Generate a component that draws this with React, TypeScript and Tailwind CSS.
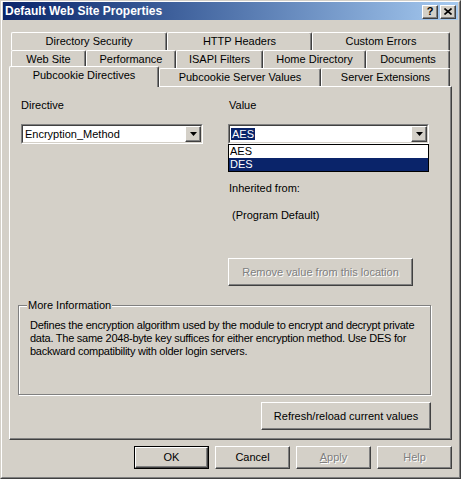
import React from "react";

const raised =
  "border border-t-white border-l-white border-r-[#404040] border-b-[#404040] shadow-[inset_-1px_-1px_0_#808080]";

function Tab({ label, className }: { label: string; className: string }) {
  return (
    <div
      className={`h-full flex items-center justify-center rounded-t-[2px] border-l border-t border-r border-l-white border-t-white border-r-[#404040] shadow-[inset_-1px_0_0_#808080] ${className}`}
    >
      {label}
    </div>
  );
}

function Button({
  children,
  className,
  disabled,
  isDefault,
}: {
  children: React.ReactNode;
  className: string;
  disabled?: boolean;
  isDefault?: boolean;
}) {
  const text = disabled ? "text-[#808080] [text-shadow:1px_1px_0_#fff]" : "text-black";
  const inner = (
    <div className={`h-full w-full flex items-center justify-center ${raised} ${text}`}>{children}</div>
  );
  if (isDefault) {
    return <div className={`border border-black ${className}`}>{inner}</div>;
  }
  return <div className={className}>{inner}</div>;
}

function Combo({ children, className }: { children: React.ReactNode; className: string }) {
  return (
    <div
      className={`h-[20px] border border-t-[#808080] border-l-[#808080] border-b-white border-r-white ${className}`}
    >
      <div className="h-full flex items-center bg-white border border-t-[#404040] border-l-[#404040] border-b-[#d4d0c8] border-r-[#d4d0c8]">
        <div className="flex-1 pl-[1px] leading-[13px]">{children}</div>
        <div className={`w-[16px] h-full flex items-center justify-center bg-[#d4d0c8] ${raised}`}>
          <svg width="7" height="4" viewBox="0 0 7 4">
            <path d="M0 0h7L3.5 4z" fill="#000" />
          </svg>
        </div>
      </div>
    </div>
  );
}

export default function App() {
  return (
    <div className="w-[461px] h-[479px] bg-[#d4d0c8] border border-t-[#d4d0c8] border-l-[#d4d0c8] border-r-[#404040] border-b-[#404040] font-['Liberation_Sans',Arial,sans-serif] text-[11px] text-black select-none">
      <div className="h-full border border-t-white border-l-white border-r-[#808080] border-b-[#808080] px-[1px] flex flex-col">
        {/* title bar */}
        <div className="h-[18px] flex items-center bg-gradient-to-r from-[#0a246a] to-[#a6caf0] pl-[2px] pr-[2px]">
          <div className="flex-1 text-white font-bold text-[12px] leading-none">Default Web Site Properties</div>
          <div className="flex gap-[2px] pt-[1px]">
            <div className={`w-[16px] h-[14px] bg-[#d4d0c8] flex items-center justify-center font-bold text-[11px] leading-none ${raised}`}>
              ?
            </div>
            <div className={`w-[16px] h-[14px] bg-[#d4d0c8] flex items-center justify-center ${raised}`}>
              <svg width="8" height="7" viewBox="0 0 8 7">
                <path d="M0.5 0.5l7 6M7.5 0.5l-7 6" stroke="#000" strokeWidth="1.6" />
              </svg>
            </div>
          </div>
        </div>

        {/* content */}
        <div className="flex-1 flex flex-col px-[6px] pt-[12px]">
          {/* tabs */}
          <div className="flex h-[18px] ml-[2px]">
            <Tab label="Directory Security" className="w-[156px]" />
            <Tab label="HTTP Headers" className="w-[145px]" />
            <Tab label="Custom Errors" className="w-[138px]" />
          </div>
          <div className="flex h-[18px] ml-[2px]">
            <Tab label="Web Site" className="w-[75px]" />
            <Tab label="Performance" className="w-[90px]" />
            <Tab label="ISAPI Filters" className="w-[87px]" />
            <Tab label="Home Directory" className="w-[103px]" />
            <Tab label="Documents" className="w-[84px]" />
          </div>
          <div className="flex h-[18px] ml-[2px] items-end">
            <div className="relative z-10 w-[150px] h-[21px] -ml-[2px] -mb-[1px] pb-[3px] bg-[#d4d0c8] flex items-center justify-center rounded-t-[2px] border-l border-t border-r border-l-white border-t-white border-r-[#404040] shadow-[inset_-1px_0_0_#808080]">
              Pubcookie Directives
            </div>
            <Tab label="Pubcookie Server Values" className="w-[162px]" />
            <Tab label="Server Extensions" className="w-[129px]" />
          </div>

          {/* panel */}
          <div className="h-[354px] flex flex-col pl-[8px] pt-[12px] border border-t-white border-l-white border-r-[#404040] border-b-[#404040] shadow-[inset_-1px_-1px_0_#808080]">
            <div className="flex pl-[3px] leading-[13px]">
              <div className="w-[182px] flex flex-col">
                <div>Directive</div>
                <Combo className="mt-[12px] w-[182px]">
                  <span className="pl-[1px]">Encryption_Method</span>
                </Combo>
              </div>
              <div className="ml-[25px] w-[201px] flex flex-col relative">
                <div className="pl-[1px]">Value</div>
                <Combo className="mt-[12px] w-[201px]">
                  <span className="bg-[#0a246a] text-white px-[1px]">AES</span>
                </Combo>
                <div className="absolute top-[45px] left-0 w-[201px] bg-white border border-black z-20">
                  <div className="h-[13px] pl-[1px] leading-[13px]">AES</div>
                  <div className="h-[13px] pl-[1px] leading-[13px] bg-[#0a246a] text-white">DES</div>
                </div>
                <div className="mt-[38px] pl-[1px]">Inherited from:</div>
                <div className="mt-[14px] pl-[4px]">(Program Default)</div>
                <Button disabled className="mt-[36px] w-[185px] h-[28px]">
                  Remove value from this location
                </Button>
              </div>
            </div>

            {/* More Information */}
            <div className="relative mt-[19px] w-[413px] h-[90px] border border-[#808080] shadow-[inset_1px_1px_0_#fff,1px_1px_0_#fff] pl-[11px] pt-[13px] leading-[13px]">
              <div className="absolute -top-[7px] left-[8px] px-[1px] bg-[#d4d0c8]">More Information</div>
              <p className="whitespace-nowrap tracking-[-0.25px]">
                Defines the encryption algorithm used by the module to encrypt and decrypt private
                <br />
                data. The same 2048-byte key suffices for either encryption method. Use DES for
                <br />
                backward compatibility with older login servers.
              </p>
            </div>

            <div className="flex w-[413px] justify-end mt-[7px]">
              <Button className="w-[170px] h-[28px]">Refresh/reload current values</Button>
            </div>
          </div>

          {/* dialog buttons */}
          <div className="flex justify-end gap-[6px] mt-[6px]">
            <Button isDefault className="w-[75px] h-[23px]">
              OK
            </Button>
            <Button className="w-[75px] h-[23px]">Cancel</Button>
            <Button disabled className="w-[75px] h-[23px]">
              <span>
                <span className="underline">A</span>pply
              </span>
            </Button>
            <Button disabled className="w-[75px] h-[23px]">
              Help
            </Button>
          </div>
        </div>
      </div>
    </div>
  );
}
